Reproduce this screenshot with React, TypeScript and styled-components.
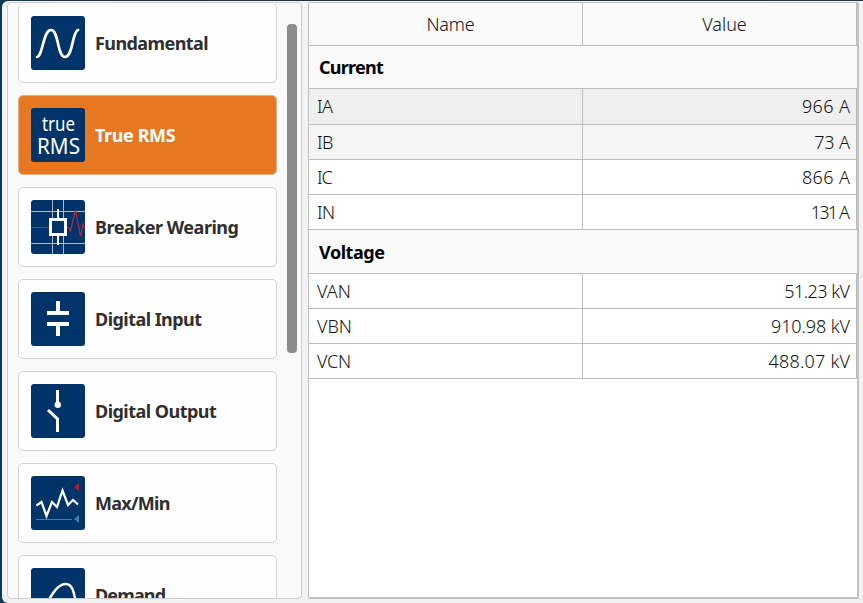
import React from "react";
import styled, { createGlobalStyle } from "styled-components";

const GlobalStyle = createGlobalStyle`
  * { box-sizing: border-box; }
  body {
    margin: 0;
    font-family: "Noto Sans", "Open Sans", sans-serif;
    overflow: hidden;
  }
`;

const Page = styled.main`
  width: 863px;
  height: 603px;
  padding: 1px 0 0 2px;
  background: linear-gradient(90deg, #0f3a56 0, #1b3044 60px, #2b3441 100%);
  overflow: hidden;
`;

const Window = styled.div`
  display: flex;
  gap: 6px;
  width: 861px;
  height: 602px;
  padding: 1px 4px 4px 5px;
  border-radius: 6px 0 0 6px;
  background: #f2f2f2;
`;

const Sidebar = styled.aside`
  display: flex;
  gap: 10px;
  flex: none;
  width: 295px;
  height: 597px;
  padding: 1px 0 0 10px;
  border: 1px solid #c9cdd1;
  border-radius: 4px;
  background: #fafafa;
`;

const CardList = styled.nav`
  display: flex;
  flex-direction: column;
  gap: 12px;
  width: 259px;
  height: 594px;
  overflow: hidden;

  > :first-child {
    margin-top: -1px;
  }
`;

const Card = styled.div<{ $active?: boolean }>`
  display: flex;
  align-items: center;
  flex: none;
  gap: 10px;
  height: 80px;
  padding: 0 12px;
  border: 1px solid ${(p) => (p.$active ? "#dcb08a" : "#cfd1d3")};
  border-radius: 5px;
  background: ${(p) => (p.$active ? "#e87722" : "#fefefe")};
  color: ${(p) => (p.$active ? "#ffffff" : "#2f2f2f")};
`;

const Icon = styled.svg`
  display: block;
  flex: none;
  width: 54px;
  height: 54px;
  border-radius: 3px;
  background: #003468;
  fill: none;
  stroke: #fff;
`;

const CardLabel = styled.span<{ $spacing: number }>`
  font-size: 18px;
  font-weight: 700;
  line-height: 24px;
  white-space: nowrap;
  letter-spacing: ${(p) => p.$spacing}px;
`;

const ScrollThumb = styled.div`
  width: 10px;
  height: 329px;
  margin-top: 20px;
  border-radius: 4px;
  background: #8b8b8b;
`;

const TablePanel = styled.section`
  flex: none;
  width: 551px;
  height: 597px;
  border: 1px solid #bebfc1;
  border-right: 2px solid #c2c2c2;
  border-bottom: 2px solid #c2c2c2;
  border-radius: 2px;
  background: #fff;
`;

const Row = styled.div<{ $height: number; $bg?: string }>`
  display: grid;
  grid-template-columns: 274px 274px;
  height: ${(p) => p.$height}px;
  border-bottom: 1px solid #bdbdbd;
  background: ${(p) => p.$bg ?? "#fff"};
`;

const GroupRow = styled.div<{ $height: number; $spacing: number }>`
  display: flex;
  align-items: center;
  height: ${(p) => p.$height}px;
  padding-left: 10px;
  border-bottom: 1px solid #bdbdbd;
  background: #fafafa;
  color: #000;
  font-size: 18px;
  font-weight: 700;
  letter-spacing: ${(p) => p.$spacing}px;
`;

const Cell = styled.div<{ $align: "left" | "center" | "right" }>`
  display: flex;
  align-items: center;
  justify-content: ${(p) => p.$align};
  padding: 0 ${(p) => (p.$align === "right" ? 6 : 0)}px ${(p) => (p.$align === "center" ? 0 : 1)}px
    ${(p) => (p.$align === "center" ? 10 : 8)}px;
  border-right: 1px solid #bdbdbd;
  color: #111;
  font-size: 18px;
  font-weight: 300;
  line-height: 24px;
  white-space: nowrap;
`;

const Run = styled.span<{ $spacing: number }>`
  letter-spacing: ${(p) => p.$spacing}px;
  margin-right: ${(p) => -p.$spacing}px;
`;

const IconText = styled.text`
  fill: #fff;
  stroke: none;
  font-family: "Noto Sans", sans-serif;
`;

const FundamentalIcon = () => (
  <Icon viewBox="0 0 54 54">
    <path d="M6 41C12 40 12 14 20 14S26 41 34 41 41 16 47 14" strokeWidth="2.7" strokeLinecap="round" />
  </Icon>
);

const TrueRmsIcon = () => (
  <Icon viewBox="0 0 54 54">
    <IconText x="11" y="23" fontSize="19" textLength="33" lengthAdjust="spacingAndGlyphs">true</IconText>
    <IconText x="6" y="46" fontSize="21" textLength="43" lengthAdjust="spacingAndGlyphs">RMS</IconText>
  </Icon>
);

const BreakerIcon = () => (
  <Icon viewBox="0 0 54 54">
    <path d="M0 11.5H54M0 43.5H54M21.5 0V54M32.5 0V54" stroke="#a9b9ca" strokeWidth="1" />
    <path d="M0 27.5H38L39.5 31 44.5 10 49.5 36 52 24 54 28" stroke="#b52945" strokeWidth="1.2" />
    <path d="M27 9V19M27 35V45" strokeWidth="2" />
    <rect x="19.5" y="19.5" width="15" height="15" strokeWidth="3" fill="#003468" />
  </Icon>
);

const DigitalInputIcon = () => (
  <Icon viewBox="0 0 54 54">
    <path d="M27 9V21M16 21H38M16 32H38M27 32V44" strokeWidth="4" />
  </Icon>
);

const DigitalOutputIcon = () => (
  <Icon viewBox="0 0 54 54">
    <path d="M26.5 6V20M26.5 48V35L17 26" strokeWidth="3" />
    <circle cx="26.8" cy="20.8" r="3.2" fill="#fff" stroke="none" />
  </Icon>
);

const MaxMinIcon = () => (
  <Icon viewBox="0 0 54 54">
    <path d="M5.5 29.5 10.5 26 15.5 40 21 26 26 31 31.5 14.5 37 29 42 24 47 28.5" strokeWidth="2.2" />
    <path d="M5 43.5H41" stroke="#467cb9" strokeWidth="1" />
    <path d="M48 7V15L43 11Z" fill="#c41230" stroke="none" />
    <path d="M48 39V47L43 43Z" fill="#467cb9" stroke="none" />
  </Icon>
);

const DemandIcon = () => (
  <Icon viewBox="0 0 54 54">
    <path d="M6 46C16 43 21 16 35 16 46 16 43 42 49 46" strokeWidth="2.4" />
  </Icon>
);

const items = [
  { label: "Fundamental", icon: <FundamentalIcon />, spacing: -0.58 },
  { label: "True RMS", icon: <TrueRmsIcon />, spacing: -0.4, active: true },
  { label: "Breaker Wearing", icon: <BreakerIcon />, spacing: -0.5 },
  { label: "Digital Input", icon: <DigitalInputIcon />, spacing: -0.54 },
  { label: "Digital Output", icon: <DigitalOutputIcon />, spacing: -0.52 },
  { label: "Max/Min", icon: <MaxMinIcon />, spacing: -0.7 },
  { label: "Demand", icon: <DemandIcon />, spacing: -0.85 },
];

const groups = [
  {
    title: "Current",
    height: 43,
    spacing: -0.75,
    rows: [
      { name: "IA", value: "966 A", height: 36, bg: "#efefef", ns: -0.5, vs: 0.4 },
      { name: "IB", value: "73 A", height: 35, bg: "#f5f5f5", ns: -0.5, vs: -0.1 },
      { name: "IC", value: "866 A", height: 35, ns: -1, vs: 0.4 },
      { name: "IN", value: "131 A", height: 35, ns: -0.5, vs: -1.8 },
    ],
  },
  {
    title: "Voltage",
    height: 44,
    spacing: -0.45,
    rows: [
      { name: "VAN", value: "51.23 kV", height: 35, ns: 0, vs: -0.55 },
      { name: "VBN", value: "910.98 kV", height: 35, ns: 0, vs: -0.1 },
      { name: "VCN", value: "488.07 kV", height: 35, ns: -0.2, vs: 0.2 },
    ],
  },
];

export default function App() {
  return (
    <>
      <GlobalStyle />
      <Page>
        <Window>
          <Sidebar>
            <CardList>
              {items.map((item) => (
                <Card key={item.label} $active={item.active}>
                  {item.icon}
                  <CardLabel $spacing={item.spacing}>{item.label}</CardLabel>
                </Card>
              ))}
            </CardList>
            <ScrollThumb />
          </Sidebar>
          <TablePanel>
            <Row $height={43} $bg="#fafafa">
              <Cell $align="center"><Run $spacing={-0.2}>Name</Run></Cell>
              <Cell $align="center"><Run $spacing={0}>Value</Run></Cell>
            </Row>
            {groups.map((group) => (
              <React.Fragment key={group.title}>
                <GroupRow $height={group.height} $spacing={group.spacing}>{group.title}</GroupRow>
                {group.rows.map((row) => (
                  <Row key={row.name} $height={row.height} $bg={row.bg}>
                    <Cell $align="left"><Run $spacing={row.ns}>{row.name}</Run></Cell>
                    <Cell $align="right"><Run $spacing={row.vs}>{row.value}</Run></Cell>
                  </Row>
                ))}
              </React.Fragment>
            ))}
          </TablePanel>
        </Window>
      </Page>
    </>
  );
}
